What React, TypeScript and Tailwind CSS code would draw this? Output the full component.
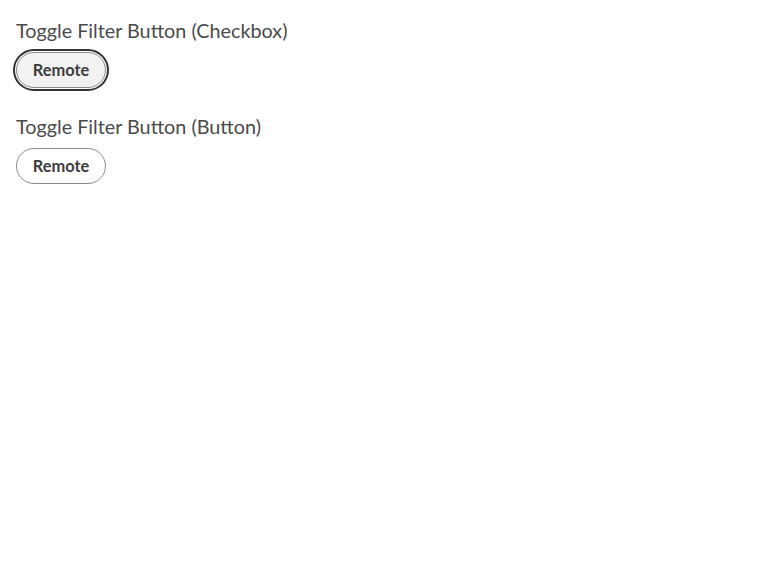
export default function App() {
  return (
    <div className="px-4 pt-[15px] font-['Lato',sans-serif] text-[#4a4a4a]">
      <h2 className="text-[19.8px] leading-[30px] m-0">Toggle Filter Button (Checkbox)</h2>
      <label className="inline-flex mt-[7px]">
        <input type="checkbox" className="sr-only" />
        <span className="inline-flex items-center justify-center h-9 w-[90px] rounded-full border border-[#8a8a8a] bg-[#f2f2f2] text-[16.4px] font-bold text-[#3d3d3d] outline-2 outline-offset-1 outline-[#333] outline-solid">
          Remote
        </span>
      </label>
      <h2 className="text-[19.8px] leading-[30px] mt-[23px]">Toggle Filter Button (Button)</h2>
      <button className="mt-[7px] flex items-center justify-center h-9 w-[90px] rounded-full border border-[#8a8a8a] bg-white text-[16.4px] font-bold text-[#3d3d3d]">
        Remote
      </button>
    </div>
  );
}
